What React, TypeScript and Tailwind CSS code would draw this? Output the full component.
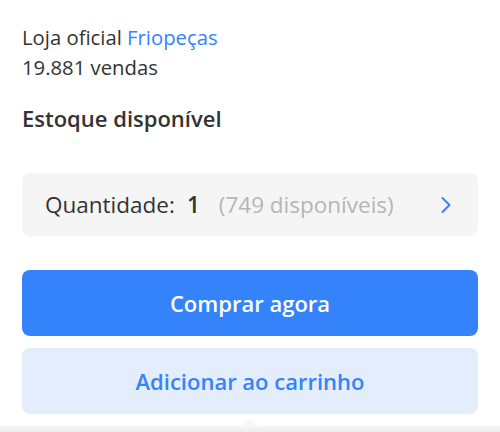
import React from 'react';

export default function App() {
  return (
    <div className="relative w-[500px] h-[432px] overflow-hidden bg-white text-[#333] font-['Open_Sans',sans-serif]">
      <div className="px-[22px] pt-[22px]">
        {/* Seller */}
        <div className="text-[20.3px] leading-[30px]">
          Loja oficial <span className="text-[#3483fa]">Friopeças</span>
        </div>
        <div className="text-[20.3px] leading-[30px]">19.881 vendas</div>

        {/* Stock */}
        <h2 className="mt-[21px] text-[22px] leading-[30px] font-semibold">Estoque disponível</h2>

        {/* Quantity */}
        <button className="mt-[40px] w-full h-[63px] rounded-[8px] bg-[#f5f5f5] flex items-center pl-[23px] pr-[26px] text-left">
          <span className="text-[22.5px]">Quantidade:</span>
          <span className="ml-[12px] text-[22.5px] font-semibold">1</span>
          <span className="ml-[19px] text-[22.5px] text-[#b5b5b5]">(749 disponíveis)</span>
          <svg className="ml-auto" width="12" height="18" viewBox="0 0 12 18" fill="none">
            <path d="M2.5 2 L9.5 9 L2.5 16" stroke="#3483fa" strokeWidth="2" strokeLinecap="round" strokeLinejoin="round" />
          </svg>
        </button>

        {/* Actions */}
        <div className="mt-[34px] flex flex-col gap-[12px]">
          <button className="w-full h-[66px] rounded-[8px] bg-[#3483fa] text-white text-[22px] font-semibold">
            Comprar agora
          </button>
          <button className="w-full h-[66px] rounded-[8px] bg-[#e3edfb] text-[#3483fa] text-[22px] font-semibold">
            Adicionar ao carrinho
          </button>
        </div>
      </div>

      {/* Bottom sheet edge with pointer */}
      <div className="absolute left-0 right-0 bottom-0 h-[6px] bg-gradient-to-b from-[#f7f7f7] to-[#ececec]" />
      <div className="absolute left-[240px] bottom-[5px] w-0 h-0 border-l-[10px] border-r-[10px] border-b-[8px] border-l-transparent border-r-transparent border-b-[#f7f7f7]" />
    </div>
  );
}
